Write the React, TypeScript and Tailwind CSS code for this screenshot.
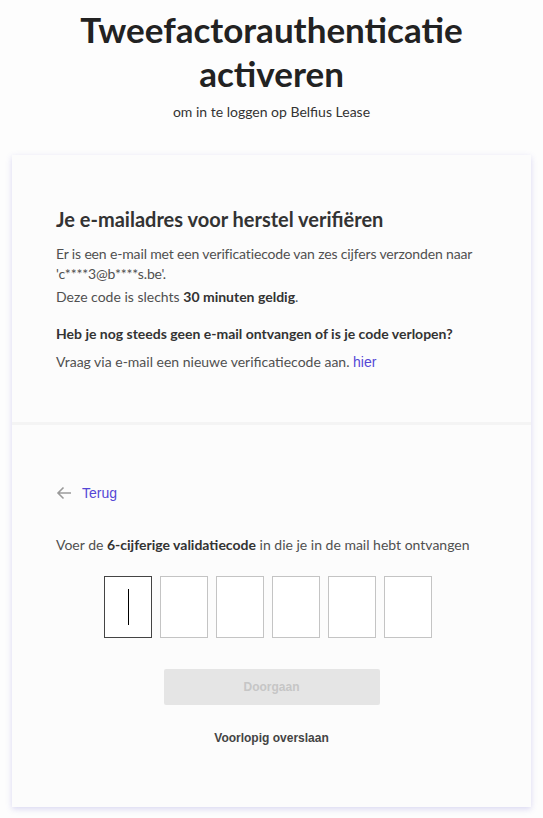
import { useState } from "react";

const SANS = "font-['Lato','Noto_Sans',sans-serif]";
const ARIAL = "font-['Liberation_Sans',Arial,sans-serif]";

const CodeBox = ({ active }: { active?: boolean }) => (
  <div
    className={`relative w-[48px] h-[62px] bg-white border ${
      active ? "border-[#444444]" : "border-[#c4c4c4]"
    }`}
  >
    {active && <span className="absolute left-[23px] top-[12px] w-px h-[36px] bg-black" />}
  </div>
);

export default function App() {
  const [digits] = useState(["", "", "", "", "", ""]);

  return (
    <div className={`min-h-[818px] bg-[#fdfdfd] text-[#3a3a3a] ${SANS}`}>
      <div className="pt-[7px] text-center">
        <h1 className="text-[35px] leading-[44px] font-bold text-[#222222] px-12">
          Tweefactorauthenticatie activeren
        </h1>
        <p className="mt-[7px] text-[14px] leading-[20px] text-[#333333]">om in te loggen op Belfius Lease</p>
      </div>

      <div className="mx-[12px] mt-[33px] bg-[#fcfcfc] shadow-[0_2px_6px_rgba(90,80,200,0.22)]">
        {/* bovenste deel */}
        <div className="px-[44px] pt-[50px] pb-[50px]">
          <h2 className="text-[20px] leading-[28px] font-bold text-[#333333]">
            Je e-mailadres voor herstel verifiëren
          </h2>
          <p className="mt-[11px] text-[14px] leading-[20px] text-[#505050] tracking-[-0.15px]">
            Er is een e-mail met een verificatiecode van zes cijfers verzonden naar 'c****3@b****s.be'.
          </p>
          <p className="mt-[3px] text-[14px] leading-[20px] text-[#505050]">
            Deze code is slechts <b className="text-[#333333]">30 minuten geldig</b>.
          </p>
          <p className="mt-[17px] text-[14px] leading-[20px] font-bold text-[#333333]">
            Heb je nog steeds geen e-mail ontvangen of is je code verlopen?
          </p>
          <p className="mt-[8px] text-[14px] leading-[20px] text-[#505050]">
            Vraag via e-mail een nieuwe verificatiecode aan.{" "}
            <a className={`text-[#5547d6] ${ARIAL}`}>hier</a>
          </p>
        </div>

        <div className="h-[3px] bg-[#f4f4f4]" />

        {/* onderste deel */}
        <div className="px-[44px] pt-[56px] pb-[60px]">
          <a className="flex items-center gap-[10px] text-[14px] leading-[24px]">
            <svg width="16" height="16" viewBox="0 0 16 16" fill="none" stroke="#9a9a9a" strokeWidth="1.6">
              <path d="M15 8H2M7.5 2.5L2 8l5.5 5.5" />
            </svg>
            <span className={`text-[#5547d6] ${ARIAL}`}>Terug</span>
          </a>

          <p className="mt-[30px] text-[14px] leading-[20px] text-[#505050]">
            Voer de <b className="text-[#333333]">6-cijferige validatiecode</b> in die je in de mail hebt ontvangen
          </p>

          <div className="mt-[21px] flex justify-center gap-[8px] pr-[8px]">
            {digits.map((_, i) => (
              <CodeBox key={i} active={i === 0} />
            ))}
          </div>

          <div className="mt-[31px] flex justify-center">
            <button
              disabled
              className={`w-[216px] h-[36px] rounded-[2px] bg-[#e5e5e5] text-[#c6c6c6] text-[12px] font-bold ${ARIAL}`}
            >
              Doorgaan
            </button>
          </div>

          <p className={`mt-[24px] text-center text-[12px] font-bold text-[#444444] ${ARIAL}`}>
            Voorlopig overslaan
          </p>
        </div>
      </div>
    </div>
  );
}
